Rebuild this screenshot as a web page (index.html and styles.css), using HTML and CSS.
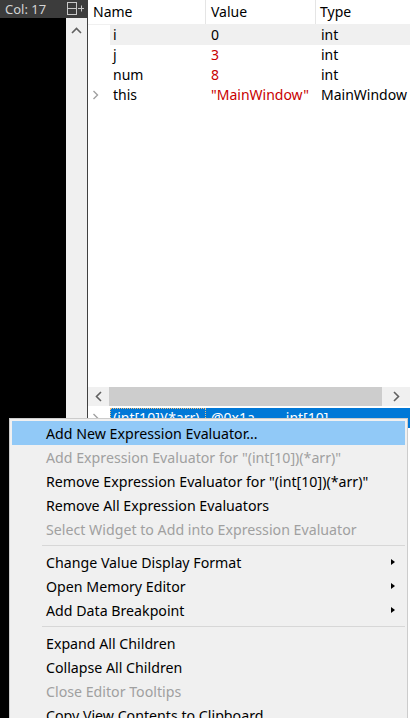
FILE: index.html
```html
<!DOCTYPE html>
<html>
<head>
<meta charset="utf-8">
<link rel="stylesheet" href="styles.css">
</head>
<body>
<div class="app">
  <div class="side">
    <div class="topbar">
      <span class="col">Col: 17</span>
      <svg class="split" width="17" height="14" viewBox="0 0 17 14"><rect x="0.5" y="0.5" width="9" height="12" fill="none" stroke="#c8c8c8"/><line x1="0.5" y1="6.5" x2="9.5" y2="6.5" stroke="#c8c8c8"/><line x1="11" y1="6.5" x2="17" y2="6.5" stroke="#c8c8c8"/><line x1="14.5" y1="3.5" x2="14.5" y2="9.5" stroke="#c8c8c8"/></svg>
    </div>
    <div class="sidebody">
      <div class="black"></div>
      <div class="vscroll">
        <svg class="up" width="11" height="7" viewBox="0 0 11 7"><path d="M1 6 L5.5 1.5 L10 6" fill="none" stroke="#606060" stroke-width="1.6"/></svg>
      </div>
      <div class="vline"></div>
    </div>
  </div>
  <div class="tree">
    <div class="header">
      <div class="hcell hname">Name</div>
      <div class="hcell hval">Value</div>
      <div class="hcell htype">Type</div>
    </div>
    <div class="rows">
      <div class="row sel">
        <div class="exp"></div>
        <div class="cell cname">i</div>
        <div class="cell cval">0</div>
        <div class="cell ctype">int</div>
      </div>
      <div class="row">
        <div class="exp"></div>
        <div class="cell cname">j</div>
        <div class="cell cval red">3</div>
        <div class="cell ctype">int</div>
      </div>
      <div class="row">
        <div class="exp"></div>
        <div class="cell cname">num</div>
        <div class="cell cval red">8</div>
        <div class="cell ctype">int</div>
      </div>
      <div class="row">
        <div class="exp"><svg width="7" height="10" viewBox="0 0 7 10"><path d="M1.5 1 L5.5 5 L1.5 9" fill="none" stroke="#a0a0a0" stroke-width="1.4"/></svg></div>
        <div class="cell cname">this</div>
        <div class="cell cval red">"MainWindow"</div>
        <div class="cell ctype">MainWindow</div>
      </div>
    </div>
    <div class="hscroll">
      <div class="harrow"><svg width="7" height="11" viewBox="0 0 7 11"><path d="M6 1 L1.5 5.5 L6 10" fill="none" stroke="#606060" stroke-width="1.6"/></svg></div>
      <div class="thumb"></div>
      <div class="harrow right"><svg width="7" height="11" viewBox="0 0 7 11"><path d="M1 1 L5.5 5.5 L1 10" fill="none" stroke="#606060" stroke-width="1.6"/></svg></div>
    </div>
    <div class="row blue">
      <div class="exp"><svg width="7" height="10" viewBox="0 0 7 10"><path d="M1.5 1 L5.5 5 L1.5 9" fill="none" stroke="#a0a0a0" stroke-width="1.4"/></svg></div>
      <div class="cell cname focus">(int[10])(*arr)</div>
      <div class="cell cval wide">@0x1a... <span class="gap">int[10]</span></div>
    </div>
  </div>
</div>

<div class="menu">
  <div class="item hi">Add New Expression Evaluator...</div>
  <div class="item dis">Add Expression Evaluator for "(int[10])(*arr)"</div>
  <div class="item">Remove Expression Evaluator for "(int[10])(*arr)"</div>
  <div class="item">Remove All Expression Evaluators</div>
  <div class="item dis">Select Widget to Add into Expression Evaluator</div>
  <div class="sep"></div>
  <div class="item sub">Change Value Display Format<span class="tri"></span></div>
  <div class="item sub">Open Memory Editor<span class="tri"></span></div>
  <div class="item sub">Add Data Breakpoint<span class="tri"></span></div>
  <div class="sep"></div>
  <div class="item">Expand All Children</div>
  <div class="item">Collapse All Children</div>
  <div class="item dis">Close Editor Tooltips</div>
  <div class="item">Copy View Contents to Clipboard</div>
</div>
</body>
</html>
```

FILE: styles.css
```css
html, body {
  margin: 0;
  padding: 0;
  width: 410px;
  height: 718px;
  overflow: hidden;
  background: #fff;
  font-family: "Noto Sans", "Open Sans", sans-serif;
  font-size: 14px;
}

.app {
  display: flex;
  height: 718px;
}

.side {
  width: 88px;
  flex: none;
  display: flex;
  flex-direction: column;
}

.topbar {
  height: 18px;
  background: #3c3c3c;
  display: flex;
  align-items: center;
  justify-content: space-between;
  padding: 0 4px 0 5px;
  box-sizing: border-box;
}

.col {
  color: #d4d4d4;
  font-size: 13px;
  line-height: 18px;
}

.split {
  display: block;
}

.sidebody {
  flex: 1;
  display: flex;
}

.black {
  width: 66px;
  background: #000;
}

.vscroll {
  width: 21px;
  background: #f0f0f0;
  display: flex;
  justify-content: center;
  padding-top: 9px;
  box-sizing: border-box;
}

.up {
  display: block;
}

.vline {
  width: 1px;
  background: #404040;
}

.tree {
  flex: 1;
  display: flex;
  flex-direction: column;
  min-width: 0;
  overflow: hidden;
}

.header {
  height: 24px;
  display: grid;
  grid-template-columns: 118px 110px 1fr;
  border-bottom: 1px solid #f0f0f0;
}

.hcell {
  line-height: 24px;
  padding-left: 5px;
  color: #000;
  border-right: 1px solid #e5e5e5;
  white-space: nowrap;
}

.hcell.htype {
  border-right: none;
  padding-left: 4px;
}

.rows {
  height: 362px;
}

.row {
  height: 20px;
  display: grid;
  grid-template-columns: 22px 96px 110px 1fr;
  line-height: 20px;
  white-space: nowrap;
}

.exp {
  display: flex;
  align-items: center;
  padding-left: 4px;
}

.exp svg {
  display: block;
}

.cname {
  padding-left: 3px;
}

.cval {
  padding-left: 5px;
}

.cval.wide {
  grid-column: span 2;
}

.ctype {
  padding-left: 5px;
}

.row.sel .cell {
  background: #f0f0f0;
}

.red {
  color: #c80000;
}

.hscroll {
  height: 19px;
  background: #f0f0f0;
  display: flex;
}

.harrow {
  width: 21px;
  display: flex;
  align-items: center;
  justify-content: center;
}

.harrow.right {
  width: 28px;
}

.thumb {
  flex: 1;
  background: #cdcdcd;
}

.row.blue {
  margin-top: 2px;
}

.row.blue .cell {
  background: #0078d7;
  color: #fff;
}

.focus {
  outline: 1px dotted #f0c080;
  outline-offset: -1px;
}

.gap {
  margin-left: 16px;
}

.menu {
  position: absolute;
  left: 9px;
  top: 418px;
  width: 399px;
  background: #f0f0f0;
  border: 1px solid #cccccc;
  padding: 2px;
  box-sizing: border-box;
  font-size: 14.2px;
}

.item {
  height: 24px;
  line-height: 25px;
  padding-left: 34px;
  color: #000;
  white-space: nowrap;
  position: relative;
}

.item.hi {
  background: #91c9f7;
}

.item.dis {
  color: #a0a0a0;
}

.sep {
  height: 9px;
  display: flex;
  align-items: center;
  padding-left: 30px;
}

.sep::after {
  content: "";
  flex: 1;
  height: 1px;
  background: #d7d7d7;
}

.tri {
  position: absolute;
  right: 10px;
  top: 9px;
  width: 0;
  height: 0;
  border-top: 3.5px solid transparent;
  border-bottom: 3.5px solid transparent;
  border-left: 4px solid #000;
}
```
